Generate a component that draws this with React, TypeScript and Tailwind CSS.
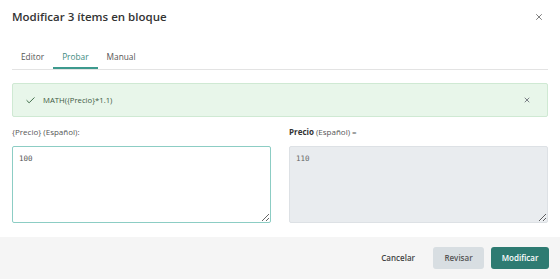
import { Check, X } from "lucide-react";

export default function App() {
  return (
    <div
      className="flex h-[279px] w-[560px] flex-col bg-white text-[#333]"
      style={{ fontFamily: '"Open Sans", sans-serif' }}
    >
      <div className="flex-1 px-3">
        <div className="flex h-[33px] items-center justify-between">
          <h1 className="text-[11.5px] font-semibold text-[#333]">Modificar 3 ítems en bloque</h1>
          <X size={10} strokeWidth={1.8} className="mr-[4px] text-[#555]" />
        </div>

        <div className="mt-[12px] flex border-b border-[#e3e3e3] text-[8.3px]">
          <button className="px-[9px] pb-[6px] pt-[6px] text-[#555]">Editor</button>
          <button className="border-b-2 border-[#3d9a8e] px-[9px] pb-[4px] pt-[6px] text-[#3d8a80]">
            Probar
          </button>
          <button className="px-[9px] pb-[6px] pt-[6px] text-[#555]">Manual</button>
        </div>

        <div className="mt-[13px] flex h-[34px] items-center rounded-[2px] border border-[#cfe9d3] bg-[#e8f6ea] px-[12px]">
          <Check size={11} strokeWidth={2} className="text-[#2f5f3a]" />
          <span className="ml-[7px] text-[7.7px] text-[#3d5a44]">MATH({"{"}Precio{"}"}*1.1)</span>
          <X size={8} strokeWidth={2} className="ml-auto mr-[4px] text-[#445]" />
        </div>

        <div className="mt-[8px] grid grid-cols-2 gap-[18px]">
          <div className="flex flex-col">
            <label className="text-[8px] leading-[14px] text-[#555]">
              {"{"}Precio{"}"} (Español):
            </label>
            <textarea
              defaultValue="100"
              className="mt-[7px] h-[77px] rounded-[2px] border border-[#8ccdc4] bg-white px-[6px] py-[6px] text-[7.5px] text-[#555] outline-none"
              style={{ fontFamily: '"DejaVu Sans Mono", monospace' }}
            />
          </div>
          <div className="flex flex-col">
            <label className="text-[8px] leading-[14px] text-[#555]">
              <span className="font-bold text-[#333]">Precio</span> (Español) =
            </label>
            <textarea
              defaultValue="110"
              readOnly
              className="mt-[7px] h-[77px] rounded-[2px] border border-[#dde1e5] bg-[#e9ecef] px-[6px] py-[6px] text-[7.5px] text-[#666] outline-none"
              style={{ fontFamily: '"DejaVu Sans Mono", monospace' }}
            />
          </div>
        </div>
      </div>

      <div className="flex h-[42px] items-center justify-end gap-[7px] bg-[#f5f5f5] px-[11px]">
        <button className="mr-[11px] text-[8px] font-semibold text-[#444]">Cancelar</button>
        <button className="h-[22px] w-[51px] rounded-[3px] bg-[#d8dee2] text-[8px] font-semibold text-[#555]">
          Revisar
        </button>
        <button className="h-[22px] w-[58px] rounded-[3px] bg-[#2e7b72] text-[8px] font-semibold text-white">
          Modificar
        </button>
      </div>
    </div>
  );
}
